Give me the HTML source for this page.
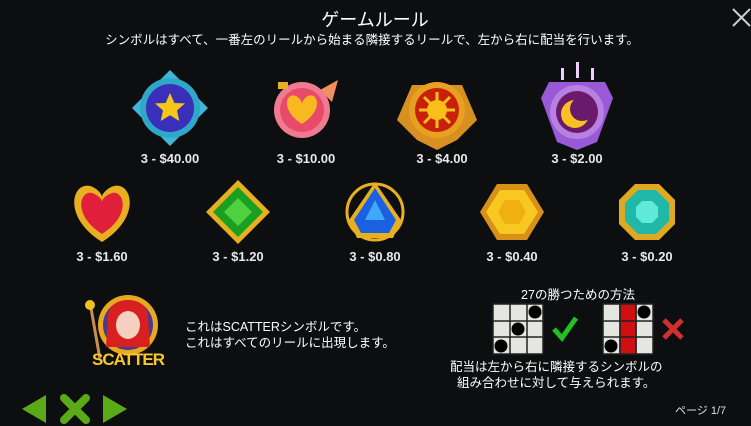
<!DOCTYPE html><html><head><meta charset="utf-8"><style>
body{margin:0;width:751px;height:426px;overflow:hidden;background:#0d0e10;font-family:"Liberation Sans","Noto Sans CJK JP",sans-serif;color:#fff;position:relative}
.t{position:absolute;white-space:nowrap}
.c{transform:translateX(-50%)}
.lbl{font-size:13px;font-weight:bold;color:#e8e8e8}
svg{position:absolute;overflow:visible}
</style></head><body>
<div class="t c" style="left:375px;top:6px;font-size:18px">ゲームルール</div>
<div class="t c" style="left:372px;top:29px;font-size:12.5px">シンボルはすべて、一番左のリールから始まる隣接するリールで、左から右に配当を行います。</div>

<svg width="751" height="426" style="left:0;top:0">
<path d="M733,9 L750,26 M750,9 L733,26" stroke="#ccc" stroke-width="2"/>
<!-- star -->
<g transform="translate(170,108)"><polygon points="0,-38 8,-30 38,0 8,30 0,38 -8,30 -38,0 -8,-30" fill="#3fb8d8"/><circle r="30" fill="#2fa7c9"/><circle r="24" fill="#3a2fb8"/><polygon points="0,-15 4.4,-5 15,-4.6 7,2.5 9.3,13 0,7.3 -9.3,13 -7,2.5 -15,-4.6 -4.4,-5" fill="#f5c818"/></g>
<!-- heart -->
<g transform="translate(302,110)"><path d="M18,-20 L36,-30 L30,-8 Z" fill="#f09060"/><circle r="28" fill="#f07a90"/><circle r="22" fill="#e84a6a"/><path d="M0,14 C-22,0 -16,-18 -6,-14 C-2,-12 0,-8 0,-6 C0,-8 2,-12 6,-14 C16,-18 22,0 0,14Z" fill="#f8b820"/><rect x="-24" y="-28" width="10" height="7" fill="#e8b020"/></g>
<!-- sun -->
<g transform="translate(437,110)"><path d="M-40,10 L-25,-25 L25,-25 L40,10 L20,30 L0,40 L-20,30Z" fill="#d89020"/><circle r="28" fill="#e8a020"/><circle r="22" fill="#c8200a"/><circle r="10" fill="#f8c018"/><g stroke="#f8c018" stroke-width="3"><line x1="0" y1="-18" x2="0" y2="18"/><line x1="-18" y1="0" x2="18" y2="0"/><line x1="-13" y1="-13" x2="13" y2="13"/><line x1="-13" y1="13" x2="13" y2="-13"/></g></g>
<!-- moon -->
<g transform="translate(577,112)"><polygon points="-36,-14 -28,-30 28,-30 36,-14 20,30 0,38 -20,30" fill="#9a5ad8"/><g fill="#f0d0ff"><rect x="-16" y="-44" width="3" height="12"/><rect x="-1" y="-50" width="3" height="16"/><rect x="14" y="-44" width="3" height="12"/></g><circle r="27" fill="#b880e0"/><circle r="21" fill="#6a1a6a"/><circle cx="-2" cy="2" r="14" fill="#f8c020"/><circle cx="5" cy="-3" r="12" fill="#6a1a6a"/></g>
<!-- red heart gem -->
<g transform="translate(102,212)"><path d="M0,30 C-40,5 -30,-30 -12,-26 C-5,-24 0,-18 0,-15 C0,-18 5,-24 12,-26 C30,-30 40,5 0,30Z" fill="#e8b020"/><path d="M0,22 C-30,3 -22,-22 -10,-19 C-4,-17 0,-13 0,-10 C0,-13 4,-17 10,-19 C22,-22 30,3 0,22Z" fill="#e0203a"/></g>
<!-- green -->
<g transform="translate(238,212)"><polygon points="0,-32 32,0 0,32 -32,0" fill="#e8b020"/><polygon points="0,-25 25,0 0,25 -25,0" fill="#1aa020"/><polygon points="0,-14 14,0 0,14 -14,0" fill="#50d040"/></g>
<!-- blue -->
<g transform="translate(375,212)"><circle r="28" fill="none" stroke="#e8b020" stroke-width="3"/><polygon points="0,-30 26,8 18,26 -18,26 -26,8" fill="#e8b020"/><polygon points="0,-24 21,8 14,21 -14,21 -21,8" fill="#1a60e0"/><polygon points="0,-12 10,8 -10,8" fill="#40a8f8"/></g>
<!-- yellow -->
<g transform="translate(512,212)"><polygon points="-15,-28 15,-28 32,0 15,28 -15,28 -32,0" fill="#d89018"/><polygon points="-12,-22 12,-22 26,0 12,22 -12,22 -26,0" fill="#f8c820"/><polygon points="-7,-12 7,-12 14,0 7,12 -7,12 -14,0" fill="#f0b010"/></g>
<!-- teal -->
<g transform="translate(647,212)"><polygon points="-12,-28 12,-28 28,-12 28,12 12,28 -12,28 -28,12 -28,-12" fill="#e0a820"/><polygon points="-9,-22 9,-22 22,-9 22,9 9,22 -9,22 -22,9 -22,-9" fill="#20b8a8"/><polygon points="-5,-11 5,-11 11,-5 11,5 5,11 -5,11 -11,5 -11,-5" fill="#60e8d8"/></g>
<!-- scatter -->
<g transform="translate(128,325)"><circle r="30" fill="#e8a820"/><circle r="25" fill="#4a3a8a"/><path d="M-20,-10 C-18,-30 18,-30 20,-10 L22,22 L-22,22Z" fill="#d82020"/><ellipse cx="0" cy="0" rx="12" ry="14" fill="#f4d0c0"/><rect x="-35" y="-22" width="3" height="50" fill="#c89050" transform="rotate(-10)"/><circle cx="-38" cy="-20" r="5" fill="#f0c020"/></g>
<!-- nav -->
<g fill="#5aaa18"><polygon points="22,409 46,395 46,423"/><polygon points="127,409 103,395 103,423"/></g>
<path d="M64,398 L86,420 M86,398 L64,420" stroke="#5aaa18" stroke-width="8" stroke-linecap="round"/>
<!-- grids -->
<g stroke="#222" stroke-width="1.5"><rect x="493" y="304" width="50" height="50" fill="#e6e6e0"/><line x1="510" y1="304" x2="510" y2="354"/><line x1="527" y1="304" x2="527" y2="354"/><line x1="493" y1="321" x2="543" y2="321"/><line x1="493" y1="337" x2="543" y2="337"/>
<rect x="603" y="304" width="50" height="50" fill="#e6e6e0"/><rect x="620" y="304" width="16" height="50" fill="#d01010"/><line x1="620" y1="304" x2="620" y2="354"/><line x1="636" y1="304" x2="636" y2="354"/><line x1="603" y1="321" x2="653" y2="321"/><line x1="603" y1="337" x2="653" y2="337"/></g>
<g fill="#000"><circle cx="535" cy="312" r="6.5"/><circle cx="518" cy="329" r="6.5"/><circle cx="501" cy="346" r="6.5"/><circle cx="644" cy="312" r="6.5"/><circle cx="611" cy="346" r="6.5"/></g>
<path d="M554,329 L562,338 L576,318" stroke="#22c020" stroke-width="5" fill="none"/>
<path d="M664,320 L682,338 M682,320 L664,338" stroke="#d03030" stroke-width="5"/>
</svg>

<div class="t c lbl" style="left:170px;top:151px">3 - $40.00</div>
<div class="t c lbl" style="left:306px;top:151px">3 - $10.00</div>
<div class="t c lbl" style="left:442px;top:151px">3 - $4.00</div>
<div class="t c lbl" style="left:577px;top:151px">3 - $2.00</div>
<div class="t c lbl" style="left:102px;top:249px">3 - $1.60</div>
<div class="t c lbl" style="left:238px;top:249px">3 - $1.20</div>
<div class="t c lbl" style="left:375px;top:249px">3 - $0.80</div>
<div class="t c lbl" style="left:512px;top:249px">3 - $0.40</div>
<div class="t c lbl" style="left:647px;top:249px">3 - $0.20</div>
<div class="t c" style="left:128px;top:350px;font-size:17px;font-weight:bold;color:#f8c828;letter-spacing:-1px">SCATTER</div>
<div class="t" style="left:185px;top:319px;font-size:12.5px;line-height:16px">これはSCATTERシンボルです。<br>これはすべてのリールに出現します。</div>
<div class="t c" style="left:578px;top:284px;font-size:12.5px">27の勝つための方法</div>
<div class="t" style="left:450px;top:359px;font-size:12.5px;line-height:16px">配当は左から右に隣接するシンボルの<br>&nbsp;&nbsp;組み合わせに対して与えられます。</div>
<div class="t" style="left:675px;top:402px;font-size:11px;color:#ddd">ページ 1/7</div>
</body></html>
